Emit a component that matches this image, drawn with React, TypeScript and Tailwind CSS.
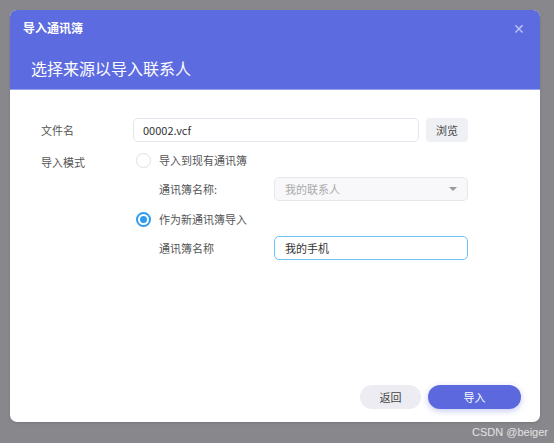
import React, { useState } from 'react';

const font = { fontFamily: '"Noto Sans CJK SC", "Noto Sans", sans-serif' };

function Radio({ checked, label, onClick }: { checked: boolean; label: string; onClick: () => void }) {
  return (
    <button onClick={onClick} className="flex items-center h-4 gap-[8px] text-[11px] text-[#555]">
      <span
        className={`w-[15px] h-[15px] rounded-full border flex items-center justify-center bg-white ${
          checked ? 'border-[#2d9cf0] border-2' : 'border-[#dcdfe6]'
        }`}
      >
        {checked && <span className="w-[7px] h-[7px] rounded-full bg-[#2d9cf0]" />}
      </span>
      {label}
    </button>
  );
}

export default function App() {
  const [mode, setMode] = useState<'exist' | 'new'>('new');

  return (
    <div className="w-[554px] h-[443px] bg-[#88888c] pt-[10px] flex flex-col" style={font}>
      {/* 对话框 */}
      <div className="ml-[10px] w-[530px] h-[412px] bg-white rounded-[7px] overflow-hidden flex flex-col shadow">
        <div className="bg-[#5d6be0] h-[80px] border-b border-[#98a2ee] flex flex-col">
          <div className="h-[36px] flex items-center justify-between pl-[13px] pr-[15px]">
            <span className="text-white font-bold text-[12px]">导入通讯簿</span>
            <span className="text-[#b9c0f4] text-[14px] leading-none">✕</span>
          </div>
          <div className="pl-[21px] mt-[10px] text-white text-[16px] leading-[24px]">选择来源以导入联系人</div>
        </div>

        {/* 表单 */}
        <div className="flex-1 pt-[28px] pl-[31px] flex text-[11px]">
          <div className="w-[92px] text-[#555] flex flex-col">
            <div className="h-[24px] flex items-center">文件名</div>
            <div className="mt-[12px] h-[16px] flex items-center">导入模式</div>
          </div>
          <div className="flex flex-col">
            <div className="flex gap-[7px]">
              <div className="w-[286px] h-[24px] border border-[#e3e4ec] rounded-[5px] px-[9px] flex items-center text-[#333]">
                00002.vcf
              </div>
              <button className="w-[42px] h-[24px] rounded-[4px] bg-[#eef0f4] text-[#444]">浏览</button>
            </div>
            <div className="mt-[10px] pl-[3px]">
              <Radio checked={mode === 'exist'} label="导入到现有通讯簿" onClick={() => setMode('exist')} />
            </div>
            <div className="mt-[9px] pl-[26px] flex items-center">
              <span className="w-[115px] text-[#555]">通讯簿名称:</span>
              <div className="w-[194px] h-[24px] border border-[#e6e7ec] rounded-[5px] bg-[#f8f8fa] px-[10px] flex items-center justify-between text-[#aaa]">
                我的联系人
                <span className="w-0 h-0 border-l-[4px] border-r-[4px] border-t-[4px] border-l-transparent border-r-transparent border-t-[#999]" />
              </div>
            </div>
            <div className="mt-[10px] pl-[3px]">
              <Radio checked={mode === 'new'} label="作为新通讯簿导入" onClick={() => setMode('new')} />
            </div>
            <div className="mt-[9px] pl-[26px] flex items-center">
              <span className="w-[115px] text-[#555]">通讯簿名称</span>
              <div className="w-[194px] h-[24px] border border-[#6cc3f7] rounded-[5px] px-[10px] flex items-center text-[#333]">
                我的手机
              </div>
            </div>
          </div>
        </div>

        {/* 底部按钮 */}
        <div className="flex justify-end gap-[7px] pr-[19px] pb-[13px] text-[11px]">
          <button className="w-[61px] h-[24px] rounded-full bg-[#ececf2] text-[#444]">返回</button>
          <button className="w-[93px] h-[24px] rounded-full bg-[#5b68de] text-white shadow-[0_2px_6px_rgba(91,104,222,0.35)]">
            导入
          </button>
        </div>
      </div>
      <div className="flex-1 flex items-center justify-end pr-[6px] text-[11px] text-[#e4e4e4]" style={{ fontFamily: '"Liberation Sans", sans-serif' }}>
        CSDN @beiger
      </div>
    </div>
  );
}
